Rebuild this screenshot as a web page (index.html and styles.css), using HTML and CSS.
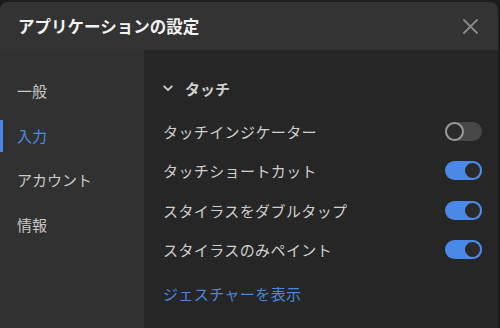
FILE: index.html
```html
<!DOCTYPE html>
<html lang="ja">
<head>
    <meta charset="UTF-8">
    <meta name="viewport" content="width=device-width, initial-scale=1.0">
    <title>アプリケーションの設定</title>
    <link rel="stylesheet" href="styles.css">
</head>
<body>

<div class="dialog">
    <header class="dialog-header">
        <span class="dialog-title">アプリケーションの設定</span>
        <button class="close-btn" aria-label="閉じる">
            <svg width="15" height="15" viewBox="0 0 15 15">
                <path d="M1 1 L14 14 M14 1 L1 14" stroke="#8a8a8a" stroke-width="1.8" stroke-linecap="round" fill="none"/>
            </svg>
        </button>
    </header>

    <div class="dialog-body">
        <nav class="sidebar">
            <a class="nav-item">一般</a>
            <a class="nav-item active">入力</a>
            <a class="nav-item">アカウント</a>
            <a class="nav-item">情報</a>
        </nav>

        <main class="content">
            <div class="section-title">
                <svg class="chevron" width="10" height="7" viewBox="0 0 10 7">
                    <path d="M1.2 1.3 L5 5.2 L8.8 1.3" stroke="#cfcfcf" stroke-width="1.8" stroke-linecap="round" stroke-linejoin="round" fill="none"/>
                </svg>
                <span>タッチ</span>
            </div>

            <div class="setting-row">
                <span>タッチインジケーター</span>
                <span class="toggle"></span>
            </div>
            <div class="setting-row">
                <span>タッチショートカット</span>
                <span class="toggle on"></span>
            </div>
            <div class="setting-row">
                <span>スタイラスをダブルタップ</span>
                <span class="toggle on"></span>
            </div>
            <div class="setting-row">
                <span>スタイラスのみペイント</span>
                <span class="toggle on"></span>
            </div>

            <a class="gesture-link">ジェスチャーを表示</a>
        </main>
    </div>
</div>

</body>
</html>
```

FILE: styles.css
```css
body {
    margin: 0;
    padding: 0;
    background: #1c1c1c;
    font-family: "Noto Sans CJK JP", "Noto Sans", sans-serif;
    height: 328px;
    overflow: hidden;
}

.dialog {
    margin: 2px 2px 0 0;
    height: 326px;
    border-radius: 8px 8px 0 0;
    overflow: hidden;
    display: flex;
    flex-direction: column;
    background: #262626;
}

.dialog-header {
    height: 48px;
    flex-shrink: 0;
    background: #333333;
    display: flex;
    align-items: center;
    justify-content: space-between;
    padding: 0 20px 0 18px;
}

.dialog-title {
    color: #f2f2f2;
    font-size: 16.5px;
    font-weight: bold;
    line-height: 24px;
}

.close-btn {
    background: none;
    border: none;
    padding: 0;
    width: 15px;
    height: 15px;
    display: flex;
    cursor: pointer;
}

.dialog-body {
    flex: 1;
    display: flex;
}

.sidebar {
    width: 144px;
    background: #313131;
    padding-top: 25px;
    display: flex;
    flex-direction: column;
    gap: 12.5px;
}

.nav-item {
    display: block;
    height: 32px;
    line-height: 32px;
    padding-left: 17px;
    font-size: 15px;
    color: #c9c9c9;
    cursor: pointer;
}

.nav-item.active {
    color: #4a8ae6;
    border-left: 3px solid #4a8ae6;
    padding-left: 14px;
}

.content {
    flex: 1;
    padding: 26px 16px 0 19px;
    display: flex;
    flex-direction: column;
}

.section-title {
    display: flex;
    align-items: center;
    height: 24px;
    color: #d0d0d0;
    font-size: 15px;
    font-weight: bold;
    margin-bottom: 11.25px;
}

.chevron {
    margin-right: 12px;
    margin-top: 1px;
}

.setting-row {
    height: 39.5px;
    display: flex;
    align-items: center;
    justify-content: space-between;
    color: #cfcfcf;
    font-size: 15px;
    letter-spacing: 0.4px;
}

.toggle {
    position: relative;
    width: 37px;
    height: 19px;
    border-radius: 10px;
    background: #474747;
    flex-shrink: 0;
}

.toggle::after {
    content: "";
    position: absolute;
    top: 0;
    left: 0;
    width: 15px;
    height: 15px;
    border-radius: 50%;
    background: #2b2b2b;
    border: 2px solid #9a9a9a;
}

.toggle.on {
    background: #4a89e8;
}

.toggle.on::after {
    left: 18px;
    border-color: #4a89e8;
    background: #2a2a2a;
}

.gesture-link {
    margin-top: 12.75px;
    line-height: 24px;
    font-size: 15px;
    letter-spacing: 0.4px;
    color: #4a86dc;
    cursor: pointer;
}
```
